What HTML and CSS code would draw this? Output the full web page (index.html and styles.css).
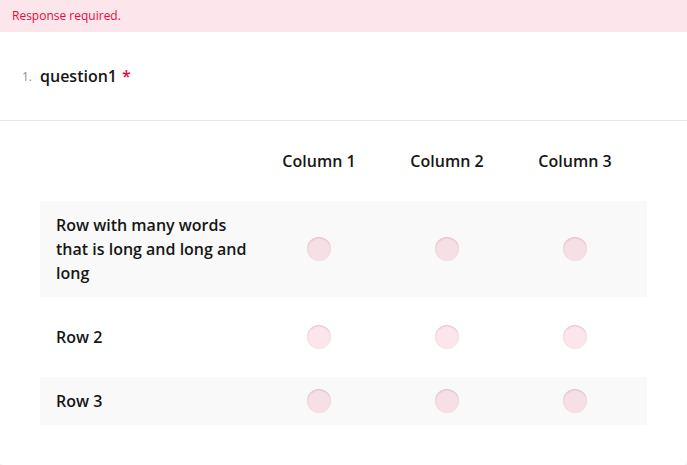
FILE: index.html
```html
<!DOCTYPE html>
<html lang="en">
<head>
<meta charset="utf-8">
<link rel="stylesheet" href="styles.css">
</head>
<body>
<div class="card">
  <div class="error">Response required.</div>
  <div class="question-head">
    <span class="num">1.</span>
    <span class="title">question1</span>
    <span class="req">*</span>
  </div>
  <div class="matrix">
    <div class="mrow header">
      <div class="label"></div>
      <div class="cell">Column 1</div>
      <div class="cell">Column 2</div>
      <div class="cell">Column 3</div>
    </div>
    <div class="mrow alt">
      <div class="label">Row with many words that is long and long and long</div>
      <div class="cell"><span class="radio"></span></div>
      <div class="cell"><span class="radio"></span></div>
      <div class="cell"><span class="radio"></span></div>
    </div>
    <div class="mrow">
      <div class="label">Row 2</div>
      <div class="cell"><span class="radio"></span></div>
      <div class="cell"><span class="radio"></span></div>
      <div class="cell"><span class="radio"></span></div>
    </div>
    <div class="mrow alt">
      <div class="label">Row 3</div>
      <div class="cell"><span class="radio"></span></div>
      <div class="cell"><span class="radio"></span></div>
      <div class="cell"><span class="radio"></span></div>
    </div>
  </div>
</div>
</body>
</html>
```
FILE: styles.css
```css
html, body {
  margin: 0;
  padding: 0;
  background: #f3f3f3;
}
body {
  font-family: "Open Sans", "Noto Sans", sans-serif;
  color: #161616;
}
.card {
  width: 687px;
  height: 465px;
  box-sizing: border-box;
  background: #fff;
  border-radius: 0 0 4px 4px;
  overflow: hidden;
}
.error {
  height: 32px;
  box-sizing: border-box;
  padding: 0 12px;
  background: #fde6eb;
  color: #e60a3e;
  font-size: 12px;
  line-height: 32px;
}
.question-head {
  height: 24px;
  padding: 32px 22px 32px;
  border-bottom: 1px solid #e6e6e6;
  display: flex;
  align-items: center;
  line-height: 24px;
}
.num {
  font-size: 12px;
  color: #909090;
  margin-right: 8px;
  padding-top: 1px;
}
.title {
  font-size: 16px;
  font-weight: 600;
}
.req {
  font-size: 16px;
  font-weight: 600;
  color: #e60a3e;
  margin-left: 5px;
}
.matrix {
  padding: 16px 40px 0;
  display: flex;
  flex-direction: column;
  gap: 16px;
}
.mrow {
  display: grid;
  grid-template-columns: 215px 128px 128px 128px 1fr;
  min-height: 48px;
  align-items: center;
  font-size: 16px;
  font-weight: 600;
  line-height: 24px;
}
.mrow.alt {
  background: #f9f9f9;
}
.label {
  padding: 12px 0 12px 16px;
}
.header .label {
  padding: 0;
}
.cell {
  display: flex;
  justify-content: center;
  align-items: center;
}
.radio {
  width: 24px;
  height: 24px;
  border-radius: 50%;
  background: rgba(230, 10, 62, 0.1);
  box-shadow: inset 0 1px 2px rgba(0, 0, 0, 0.15);
}
```
